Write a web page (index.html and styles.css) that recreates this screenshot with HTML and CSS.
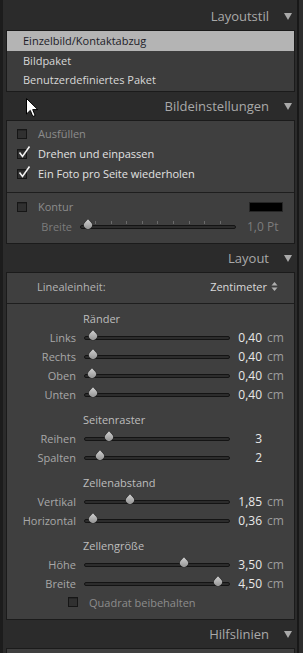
FILE: index.html
```html
<!DOCTYPE html>
<html lang="de">
<head>
  <meta charset="UTF-8">
  <meta name="viewport" content="width=device-width, initial-scale=1.0">
  <title>Drucken – Layout</title>
  <link rel="stylesheet" href="styles.css">
</head>
<body>
  <div class="panel">
    <div class="head head-first">
      <span>Layoutstil</span>
      <svg class="tri" width="8" height="7" viewBox="0 0 8 7"><polygon points="0,0 8,0 4,7"/></svg>
    </div>
    <div class="box list">
      <div class="item sel">Einzelbild/Kontaktabzug</div>
      <div class="item">Bildpaket</div>
      <div class="item">Benutzerdefiniertes Paket</div>
    </div>

    <div class="head">
      <span>Bildeinstellungen</span>
      <svg class="tri" width="8" height="7" viewBox="0 0 8 7"><polygon points="0,0 8,0 4,7"/></svg>
    </div>
    <div class="box">
      <div class="sub checks">
        <div class="check off"><span class="cb"></span>Ausfüllen</div>
        <div class="check"><span class="cb"><svg class="tick" width="14" height="13" viewBox="0 0 14 13"><path d="M1.5 6.5 L4.5 10.5 L11.5 0.5"/></svg></span>Drehen und einpassen</div>
        <div class="check"><span class="cb"><svg class="tick" width="14" height="13" viewBox="0 0 14 13"><path d="M1.5 6.5 L4.5 10.5 L11.5 0.5"/></svg></span>Ein Foto pro Seite wiederholen</div>
      </div>
      <div class="sub contour">
        <div class="check off kontur"><span class="cb"></span>Kontur<span class="swatch"></span></div>
        <div class="srow thin">
          <span class="label">Breite</span>
          <span class="track ticks"><span class="thumb" style="left:8px"></span></span>
          <span class="val">1,0 Pt</span>
        </div>
      </div>
    </div>

    <div class="head">
      <span>Layout</span>
      <svg class="tri" width="8" height="7" viewBox="0 0 8 7"><polygon points="0,0 8,0 4,7"/></svg>
    </div>
    <div class="box">
      <div class="sub unit">
        <span>Linealeinheit:</span>
        <span class="unit-pick">Zentimeter <svg width="7" height="9" viewBox="0 0 7 9"><polygon points="0.5,3.5 6.5,3.5 3.5,0"/><polygon points="0.5,5.5 6.5,5.5 3.5,9"/></svg></span>
      </div>
      <div class="sub sliders">
        <div class="group">
          <div class="gtitle">Ränder</div>
          <div class="srow"><span class="label">Links</span><span class="track"><span class="thumb" style="left:9px"></span></span><span class="num">0,40</span><span class="unitx">cm</span></div>
          <div class="srow"><span class="label">Rechts</span><span class="track"><span class="thumb" style="left:9px"></span></span><span class="num">0,40</span><span class="unitx">cm</span></div>
          <div class="srow"><span class="label">Oben</span><span class="track"><span class="thumb" style="left:8px"></span></span><span class="num">0,40</span><span class="unitx">cm</span></div>
          <div class="srow"><span class="label">Unten</span><span class="track"><span class="thumb" style="left:9px"></span></span><span class="num">0,40</span><span class="unitx">cm</span></div>
        </div>
        <div class="group">
          <div class="gtitle">Seitenraster</div>
          <div class="srow"><span class="label">Reihen</span><span class="track"><span class="thumb" style="left:25px"></span></span><span class="num">3</span><span class="unitx"></span></div>
          <div class="srow"><span class="label">Spalten</span><span class="track"><span class="thumb" style="left:16px"></span></span><span class="num">2</span><span class="unitx"></span></div>
        </div>
        <div class="group">
          <div class="gtitle">Zellenabstand</div>
          <div class="srow"><span class="label">Vertikal</span><span class="track"><span class="thumb" style="left:46px"></span></span><span class="num">1,85</span><span class="unitx">cm</span></div>
          <div class="srow"><span class="label">Horizontal</span><span class="track"><span class="thumb" style="left:9px"></span></span><span class="num">0,36</span><span class="unitx">cm</span></div>
        </div>
        <div class="group">
          <div class="gtitle">Zellengröße</div>
          <div class="srow"><span class="label">Höhe</span><span class="track"><span class="thumb" style="left:100px"></span></span><span class="num">3,50</span><span class="unitx">cm</span></div>
          <div class="srow"><span class="label">Breite</span><span class="track"><span class="thumb" style="left:134px"></span></span><span class="num">4,50</span><span class="unitx">cm</span></div>
          <div class="check off square"><span class="cb"></span>Quadrat beibehalten</div>
        </div>
      </div>
    </div>

    <div class="head">
      <span>Hilfslinien</span>
      <svg class="tri" width="8" height="7" viewBox="0 0 8 7"><polygon points="0,0 8,0 4,7"/></svg>
    </div>
    <div class="box last"></div>
  </div>

  <svg class="cursor" width="13" height="20" viewBox="0 0 13 20">
    <path d="M0.5 0.5 L0.5 16 L4.3 12.4 L6.8 18.5 L9.2 17.5 L6.7 11.6 L11.8 11.6 Z" fill="#fff" stroke="#000" stroke-width="1"/>
  </svg>
</body>
</html>
```

FILE: styles.css
```css
body {
  margin: 0;
  background: #2d2d2d;
  font-family: 'Open Sans', sans-serif;
  font-size: 11px;
  color: #dcdcdc;
  height: 653px;
  overflow: hidden;
  position: relative;
}

.panel {
  width: 294px;
  height: 653px;
  border-left: 3px solid #1c1c1c;
  border-right: 2px solid #181818;
  background: #2b2b2b;
  box-sizing: content-box;
}

/* section headers */
.head {
  height: 28px;
  display: flex;
  align-items: center;
  justify-content: flex-end;
  gap: 15px;
  padding-right: 5px;
  color: #a9a9a9;
  font-size: 13px;
}

.head-first {
  height: 30px;
  padding-top: 1px;
  box-sizing: border-box;
}

.tri {
  fill: #a9a9a9;
  margin-top: 1px;
}

.box {
  margin: 0 2px 0 3px;
  background: #3f3f3f;
  border: 1px solid #1b1b1b;
}

.box.last {
  height: 10px;
}

/* layout style list */
.list {
  background: #3c3c3c;
  padding-bottom: 1px;
}

.item {
  height: 19.5px;
  line-height: 19.5px;
  padding-left: 16px;
  color: #d8d8d8;
}

.item.sel {
  background: #b4b4b4;
  color: #1c1c28;
}

/* checkboxes */
.sub {
  border-top: 1px solid #1e1e1e;
}

.sub:first-child {
  border-top: none;
}

.checks {
  padding: 3px 0 8px;
}

.check {
  display: flex;
  align-items: center;
  height: 20px;
  padding-left: 10px;
  color: #e2e2e2;
}

.check.off {
  color: #8c8c8c;
}

.cb {
  position: relative;
  width: 8px;
  height: 8px;
  margin-right: 11px;
  background: #303030;
  border: 1px solid #161616;
  box-shadow: inset 0 1px 0 #262626;
  flex: none;
}

.tick {
  position: absolute;
  left: 0;
  top: -4px;
  fill: none;
  stroke: #f2f2f2;
  stroke-width: 1.6;
}

.contour {
  padding: 4px 0 6px;
}

.swatch {
  width: 32px;
  height: 8px;
  margin-left: auto;
  margin-right: 11px;
  background: #000;
  border: 1px solid #262626;
}

/* slider rows */
.srow {
  display: grid;
  grid-template-columns: 77px 146px 32px 1fr;
  align-items: center;
  height: 19px;
}

.label {
  text-align: right;
  padding-right: 8px;
  color: #a8a8a8;
}

.track {
  position: relative;
  height: 4px;
  background: #2c2c2c;
  border: 1px solid #141414;
  border-radius: 3px;
  box-sizing: border-box;
  margin-top: 1px;
}

.thumb {
  position: absolute;
  top: -5px;
  width: 8px;
  height: 8px;
  margin-left: -5px;
  background: linear-gradient(135deg, #d0d0d0, #8a8a8a);
  border-radius: 0 55% 55% 55%;
  transform: rotate(45deg);
  box-shadow: 0 0 0 0.5px #222;
}

.num {
  text-align: right;
  color: #e8e8e8;
  font-size: 12px;
}

.unitx {
  padding-left: 5px;
  color: #9c9c9c;
  font-size: 12px;
}

.srow.thin {
  grid-template-columns: 73px 156px 1fr;
  height: 20px;
}

.srow.thin .label,
.srow.thin .val {
  color: #7c7c7c;
}

.srow.thin .val {
  padding-left: 11px;
  font-size: 12px;
}

.ticks::before {
  content: "";
  position: absolute;
  left: 14px;
  right: 6px;
  top: -5px;
  height: 3px;
  background: repeating-linear-gradient(90deg, #6a6a6a 0 1px, transparent 1px 15.6px);
}

/* ruler unit */
.unit {
  display: flex;
  justify-content: space-between;
  align-items: center;
  height: 20px;
  padding: 4px 16px 6px 30px;
  color: #b4b4b4;
}

.unit-pick {
  color: #dadada;
  display: flex;
  align-items: center;
  gap: 4px;
}

.unit-pick svg {
  fill: #b0b0b0;
}

.sliders {
  padding: 5px 0 7px;
}

.group + .group {
  margin-top: 6px;
}

.gtitle {
  height: 19px;
  line-height: 19px;
  padding-left: 76px;
  color: #bdbdbd;
}

.check.square {
  padding-left: 61px;
  height: 19px;
}

.cursor {
  position: absolute;
  left: 26px;
  top: 98px;
}
```
